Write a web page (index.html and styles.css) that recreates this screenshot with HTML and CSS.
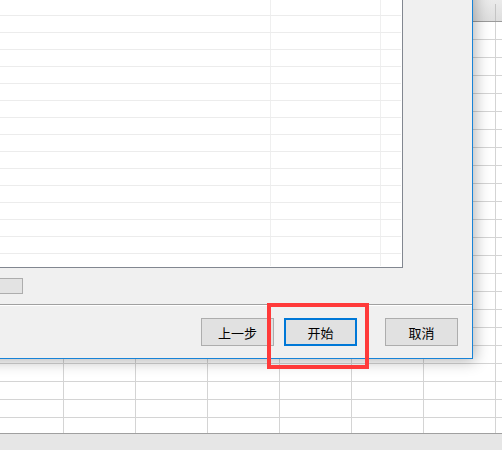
FILE: index.html
```html
<!DOCTYPE html>
<html>

<head>
    <title>Import Wizard</title>
    <link rel="stylesheet" href="styles.css">
</head>

<body>
    <div class="sheet">
        <div class="sheet-head"></div>
        <div class="sheet-grid"></div>
        <div class="status-bar"></div>
    </div>

    <!-- wizard dialog on top of the sheet -->
    <div class="dialog">
        <div class="dialog-body">
            <div class="list">
                <div class="row"><div class="cell c1"></div><div class="cell c2"></div><div class="cell c3"></div></div>
                <div class="row"><div class="cell c1"></div><div class="cell c2"></div><div class="cell c3"></div></div>
                <div class="row"><div class="cell c1"></div><div class="cell c2"></div><div class="cell c3"></div></div>
                <div class="row"><div class="cell c1"></div><div class="cell c2"></div><div class="cell c3"></div></div>
                <div class="row"><div class="cell c1"></div><div class="cell c2"></div><div class="cell c3"></div></div>
                <div class="row"><div class="cell c1"></div><div class="cell c2"></div><div class="cell c3"></div></div>
                <div class="row"><div class="cell c1"></div><div class="cell c2"></div><div class="cell c3"></div></div>
                <div class="row"><div class="cell c1"></div><div class="cell c2"></div><div class="cell c3"></div></div>
                <div class="row"><div class="cell c1"></div><div class="cell c2"></div><div class="cell c3"></div></div>
                <div class="row"><div class="cell c1"></div><div class="cell c2"></div><div class="cell c3"></div></div>
                <div class="row"><div class="cell c1"></div><div class="cell c2"></div><div class="cell c3"></div></div>
                <div class="row"><div class="cell c1"></div><div class="cell c2"></div><div class="cell c3"></div></div>
                <div class="row"><div class="cell c1"></div><div class="cell c2"></div><div class="cell c3"></div></div>
                <div class="row"><div class="cell c1"></div><div class="cell c2"></div><div class="cell c3"></div></div>
                <div class="row"><div class="cell c1"></div><div class="cell c2"></div><div class="cell c3"></div></div>
                <div class="row"><div class="cell c1"></div><div class="cell c2"></div><div class="cell c3"></div></div>
                <div class="row filler"><div class="cell c1"></div><div class="cell c2"></div><div class="cell c3"></div></div>
            </div>
            <div class="list-tools">
                <button class="small-button"></button>
            </div>
        </div>

        <div class="dialog-footer">
            <button class="button">上一步</button>
            <button class="button primary">开始</button>
            <button class="button cancel">取消</button>
        </div>
    </div>

    <!-- red highlight around the start button -->
    <div class="highlight"></div>
</body>

</html>
```

FILE: styles.css
```css
body {
    margin: 0;
    width: 502px;
    height: 450px;
    overflow: hidden;
    position: relative;
    font-family: "Noto Sans CJK SC", "Noto Sans", sans-serif;
    background-color: #ffffff;
}

/* spreadsheet behind the dialog */

.sheet {
    height: 100%;
    display: flex;
    flex-direction: column;
}

.sheet-head {
    height: 21px;
    border-bottom: 1px solid #9b9b9b;
    background:
        repeating-linear-gradient(to right, transparent 0 63px, #c4c4c4 63px 64px, transparent 64px 72px) 0 4px / 100% 17px no-repeat,
        linear-gradient(#ebebeb, #dedede);
}

.sheet-grid {
    flex: 1;
    background:
        repeating-linear-gradient(to bottom, transparent 0 17px, #d4d4d4 17px 18px),
        repeating-linear-gradient(to right, transparent 0 63px, #d4d4d4 63px 64px, transparent 64px 72px),
        #ffffff;
}

.status-bar {
    height: 16px;
    border-top: 1px solid #a0a0a0;
    background-color: #e6e6e6;
}

/* dialog */

.dialog {
    position: absolute;
    left: -40px;
    top: -36px;
    width: 513px;
    height: 395px;
    box-sizing: border-box;
    border: 1px solid #1883d7;
    background-color: #f0f0f0;
    box-shadow: 2px 2px 14px rgba(0, 0, 0, 0.3);
    display: flex;
    flex-direction: column;
}

.dialog-body {
    flex: 1;
    padding: 16px 69px 0 11px;
}

.list {
    height: 287px;
    box-sizing: border-box;
    border: 1px solid #828790;
    padding-right: 1px;
    background-color: #ffffff;
    display: flex;
    flex-direction: column;
}

.row {
    display: flex;
    height: 17px;
    flex-shrink: 0;
    box-sizing: border-box;
    border-bottom: 1px solid #ececec;
}

.row.filler {
    flex: 1;
    border-bottom: none;
    padding-bottom: 1px;
}

.cell {
    box-sizing: border-box;
}

.c1 {
    flex: 1;
    border-right: 1px solid #efefef;
}

.c2 {
    width: 110px;
    border-right: 1px solid #efefef;
}

.c3 {
    width: 20px;
}

.list-tools {
    margin-top: 10px;
    display: flex;
}

.small-button {
    width: 51px;
    height: 16px;
    padding: 0;
    box-sizing: border-box;
    border: 1px solid #adadad;
    background-color: #e3e3e3;
}

.dialog-footer {
    height: 54px;
    box-sizing: border-box;
    border-top: 1px solid #a0a0a0;
    box-shadow: inset 0 1px #ffffff;
    padding: 13px 14px 0 0;
    display: flex;
    justify-content: flex-end;
    align-items: flex-start;
}

.button {
    width: 73px;
    height: 28px;
    padding: 0;
    box-sizing: border-box;
    border: 1px solid #adadad;
    background-color: #e1e1e1;
    font-family: "Noto Sans CJK SC", sans-serif;
    font-size: 13px;
    color: #000000;
}

.button.primary {
    margin-left: 10px;
    border: 2px solid #0078d7;
}

.button.cancel {
    margin-left: 28px;
}

.highlight {
    position: absolute;
    left: 267px;
    top: 303px;
    width: 102px;
    height: 66px;
    box-sizing: border-box;
    border: 4px solid #ff3a3a;
}
```
